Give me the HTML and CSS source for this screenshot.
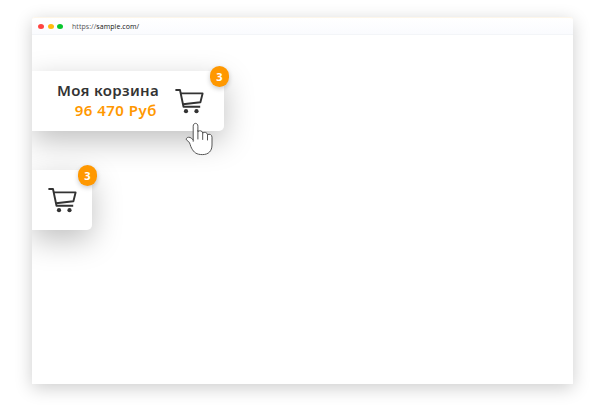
FILE: index.html
```html
<!DOCTYPE html>
<html lang="ru">
<head>
<meta charset="utf-8">
<title>Моя корзина</title>
<link rel="stylesheet" href="styles.css">
</head>
<body>
<svg class="defs" width="0" height="0" aria-hidden="true">
  <symbol id="cart" viewBox="0 0 30 27">
    <g fill="none" stroke="#333" stroke-width="1.9" stroke-linejoin="round">
      <path d="M.4 2H5L8.5 18.8H25.2"/>
      <path d="M5.6 5.4H27.6L25.4 14.3L8 16.2"/>
    </g>
    <circle cx="11" cy="23.2" r="2.1" fill="#333"/>
    <circle cx="21.5" cy="23.2" r="2.1" fill="#333"/>
  </symbol>
</svg>
<main class="window">
  <header class="bar">
    <i class="dot red"></i><i class="dot yellow"></i><i class="dot green"></i>
    <div class="url">https://<b>sample.com/</b></div>
  </header>
  <section class="page">
    <div class="card wide">
      <div class="text">
        <div class="title">Моя корзина</div>
        <div class="sum">96 470 Руб</div>
      </div>
      <svg class="cart"><use href="#cart"/></svg>
      <span class="badge">3</span>
      <svg class="hand" viewBox="0 0 30 34">
        <path d="M8.2 19.3V4.2C8.2 .4 12.9.4 12.9 4.2V9.5C14.5 8.2 17.4 8.6 17.7 11C19.5 9.7 22.3 10.3 22.5 12.7C24.4 11.6 27 12.5 27 15.2V23C27 29 23.5 32.6 17.5 32.6C11.5 32.6 9 30.6 6.6 26.2C5.3 23.9 5.1 21 3.7 19.7L1.5 18C.2 15.5 4.4 14.3 6.4 16.2L8.2 18M12.9 8.5V17M17.7 11V17.5M22.5 12.7V18" fill="#fff" stroke="#555" stroke-width="1" stroke-linejoin="round" stroke-linecap="round"/>
      </svg>
    </div>
    <div class="card small">
      <svg class="cart"><use href="#cart"/></svg>
      <span class="badge">3</span>
    </div>
  </section>
</main>
</body>
</html>
```
FILE: styles.css
```css
* { box-sizing: border-box; }
body {
  margin: 0;
  height: 415px;
  padding: 17px 0 0 32px;
  background: #fff;
  overflow: hidden;
  font-family: "Noto Sans", "Open Sans", sans-serif;
}
.defs { position: absolute; }
.window {
  width: 541px;
  height: 367px;
  background: #fff;
  border-radius: 3px 3px 0 0;
  box-shadow: 0 4px 18px rgba(0, 0, 0, .2);
}
.bar {
  display: flex;
  align-items: center;
  height: 18px;
  padding-left: 6px;
  border-top: 1px solid #fdf6ea;
  border-bottom: 1px solid #f3f5f8;
  border-radius: 3px 3px 0 0;
  background: linear-gradient(#fff, #fafbfe);
}
.dot {
  width: 6px;
  height: 5px;
  margin-right: 3.5px;
  border-radius: 50%;
}
.red { background: #ff4340; }
.yellow { background: #ffba0c; }
.green { background: #08c62e; }
.url {
  margin: 1px 0 0 5.5px;
  font: 7px/10px "Open Sans", sans-serif;
  letter-spacing: .06px;
  color: #555;
}
.url b { font-weight: 500; color: #111; }
.page {
  height: 349px;
  padding-top: 36px;
  overflow: hidden;
}
.card {
  position: relative;
  display: flex;
  height: 60px;
  background: #fff;
  border-radius: 0 5px 5px 0;
  box-shadow: 0 10px 30px rgba(0, 0, 0, .25);
}
.wide { width: 192px; }
.small { width: 60px; margin-top: 39px; }
.text {
  width: 127px;
  padding-top: 9px;
  text-align: right;
  font-size: 15px;
  font-weight: 600;
  line-height: 20px;
  white-space: nowrap;
}
.title { color: #333; letter-spacing: .32px; }
.sum { padding-right: 2px; color: #ff9800; letter-spacing: .5px; }
.cart { width: 30px; height: 27px; margin: 17px 0 0 16px; }
.badge {
  position: absolute;
  top: -5px;
  right: -5px;
  width: 19px;
  height: 21px;
  border-radius: 9.5px;
  background: #ff9800;
  box-shadow: 0 2px 5px rgba(0, 0, 0, .2);
  color: #fff;
  font-size: 11px;
  font-weight: 700;
  line-height: 21px;
  text-align: center;
}
.hand {
  position: absolute;
  left: 153px;
  top: 51px;
  width: 30px;
  height: 34px;
}
```
